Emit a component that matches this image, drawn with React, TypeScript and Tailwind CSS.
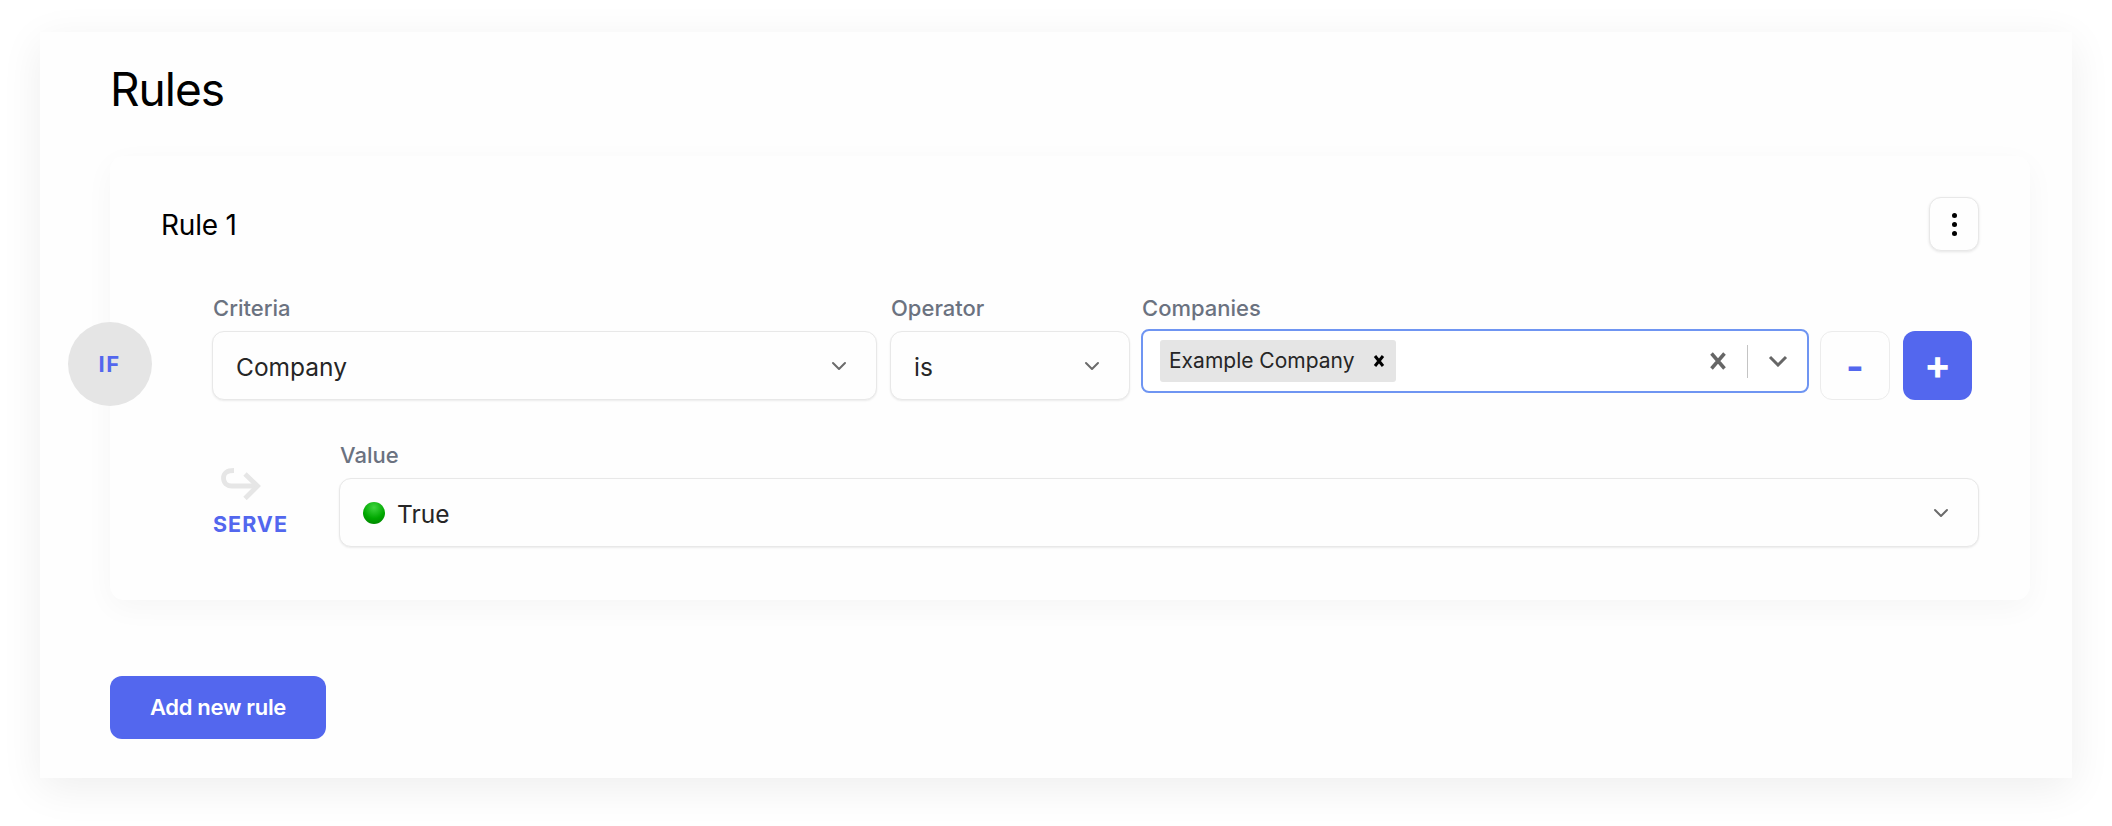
import { ChevronDown } from "lucide-react";

const shadowField = "shadow-[0_1px_2px_rgba(0,0,0,0.08)]";

function Field({ label, className, children }: { label: string; className: string; children: React.ReactNode }) {
  return (
    <div className={className}>
      <div className="h-[30px] pl-[1px] text-[22px] leading-[30px] font-medium text-[#6b7280] mb-[8px]">{label}</div>
      {children}
    </div>
  );
}

function SelectBox({ text }: { text: string }) {
  return (
    <div className={`h-[69px] flex items-center justify-between pl-[23px] pr-[25px] bg-[#fefefe] border border-[#e8e8e8] rounded-[12px] ${shadowField}`}>
      <span className="pt-[4px] text-[24.5px] text-[#262626]">{text}</span>
      <ChevronDown className="w-[24px] h-[24px] text-[#6b6b6b]" strokeWidth={2} />
    </div>
  );
}

export default function App() {
  return (
    <div className="h-[826px] bg-white pt-[32px] px-[40px] font-['Inter',sans-serif]">
      <div className="h-[746px] bg-[#fefefe] pl-[70px] pr-[42px] shadow-[0_10px_40px_rgba(0,0,0,0.07)]">
        <h1 className="h-[124px] pt-[30px] text-[46px] leading-[54px] font-normal tracking-[-1px] text-black">Rules</h1>

        <div className="relative h-[444px] pt-[41px] px-[51px] bg-[#fefefe] rounded-[14px] shadow-[0_8px_30px_rgba(0,0,0,0.035)]">
          <div className="absolute left-[-42px] top-[166px] w-[84px] h-[84px] rounded-full bg-[#e5e5e5] flex items-center justify-center pr-[1px] text-[22px] font-bold tracking-[1.5px] text-[#5367ee]">
            IF
          </div>

          <div className="h-[54px] flex items-center justify-between">
            <span className="pt-[2px] text-[28px] tracking-[-0.2px] text-black">Rule 1</span>
            <button className="w-[50px] h-[54px] flex flex-col items-center justify-center gap-[4px] bg-[#fefefe] border border-[#e8e8e8] rounded-[12px] shadow-[0_1px_3px_rgba(0,0,0,0.1)]">
              <span className="w-[5px] h-[5px] rounded-full bg-black" />
              <span className="w-[5px] h-[5px] rounded-full bg-black" />
              <span className="w-[5px] h-[5px] rounded-full bg-black" />
            </button>
          </div>

          <div className="mt-[42px] pl-[51px] flex items-start">
            <Field label="Criteria" className="w-[665px]">
              <SelectBox text="Company" />
            </Field>
            <Field label="Operator" className="w-[240px] ml-[13px]">
              <SelectBox text="is" />
            </Field>
            <Field label="Companies" className="w-[668px] ml-[11px]">
              <div className="h-[64px] -mt-[2px] flex items-center pl-[17px] pr-[19px] bg-white border-2 border-[#6f95f2] rounded-[8px]">
                <div className="h-[42px] w-[236px] flex items-center justify-between pl-[9px] pr-[11px] bg-[#e5e5e5] rounded-[3px]">
                  <span className="text-[21px] text-[#262626]">Example Company</span>
                  <svg width="12" height="14" viewBox="0 0 12 14" fill="none" stroke="#000" strokeWidth="3">
                    <path d="M2 2l8 10M10 2l-8 10" />
                  </svg>
                </div>
                <div className="ml-auto flex items-center">
                  <svg width="18" height="18" viewBox="0 0 18 18" fill="none" stroke="#666" strokeWidth="3.5">
                    <path d="M2.5 1.5l13 15M15.5 1.5l-13 15" />
                  </svg>
                  <span className="w-px h-[33px] bg-[#c4c4c4] ml-[20px] mr-[20px]" />
                  <svg width="20" height="12" viewBox="0 0 20 12" fill="none" stroke="#666" strokeWidth="3">
                    <path d="M2 2l8 8 8-8" />
                  </svg>
                </div>
              </div>
            </Field>
            <button className="w-[70px] h-[69px] mt-[38px] ml-[11px] bg-[#fefefe] border border-[#ececec] rounded-[12px] text-[38px] leading-none font-bold text-[#5367ee]">
              -
            </button>
            <button className="w-[69px] h-[69px] mt-[38px] ml-[13px] pb-[2px] bg-[#5367ee] rounded-[12px] text-[40px] leading-none font-bold text-white">
              +
            </button>
          </div>

          <div className="mt-[40px] pl-[51px] flex items-start">
            <div className="w-[127px] pl-[1px] pt-[28px]">
              <svg className="ml-[8px]" width="40" height="32" viewBox="0 0 40 32" fill="none" stroke="#e6e6e6" strokeWidth="4.8">
                <path d="M13 2.5C6 2.5 2.5 5 2.5 10C2.5 15 6 18 11 18H36" />
                <path d="M24 6L36.5 18L24 30.5" />
              </svg>
              <div className="mt-[12px] text-[21.5px] leading-[24px] font-bold tracking-[1px] text-[#5367ee]">SERVE</div>
            </div>
            <Field label="Value" className="flex-1">
              <div className={`h-[69px] flex items-center justify-between pl-[23px] pr-[25px] bg-[#fefefe] border border-[#e8e8e8] rounded-[12px] ${shadowField}`}>
                <div className="flex items-center gap-[12px]">
                  <span className="w-[22px] h-[22px] rounded-full bg-[radial-gradient(circle_at_50%_25%,#3fd43f,#00a800_55%,#007a00)]" />
                  <span className="pt-[4px] text-[24.5px] text-[#262626]">True</span>
                </div>
                <ChevronDown className="w-[24px] h-[24px] text-[#6b6b6b]" strokeWidth={2} />
              </div>
            </Field>
          </div>
        </div>

        <button className="mt-[76px] w-[216px] h-[63px] bg-[#5367ee] rounded-[12px] text-[22px] font-semibold tracking-[-0.3px] text-white">
          Add new rule
        </button>
      </div>
    </div>
  );
}
